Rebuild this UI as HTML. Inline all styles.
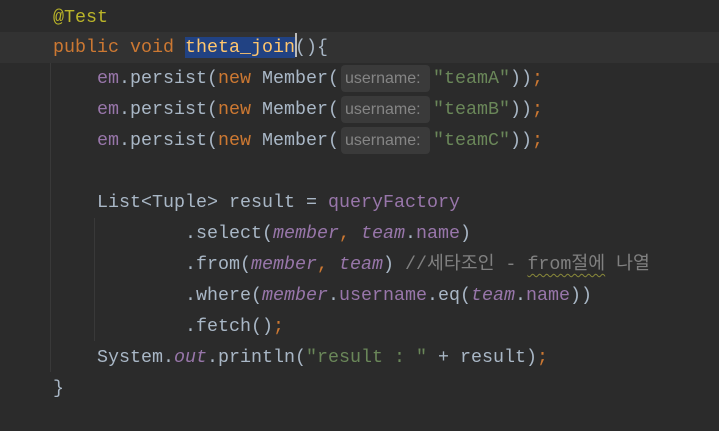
<!DOCTYPE html>
<html><head><meta charset="utf-8">
<style>
html,body{margin:0;padding:0;}
body{width:719px;height:431px;background:#2b2b2b;position:relative;overflow:hidden;
font-family:"Liberation Mono","Noto Sans CJK KR",monospace;font-size:18.33px;color:#a9b7c6;}
.l{position:absolute;left:53px;height:31px;line-height:31px;white-space:pre;}
.cur{position:absolute;left:0;top:32px;width:719px;height:31px;background:#323232;}
.k{color:#cc7832}.m{color:#ffc66d}.f{color:#9876aa}.s{color:#6a8759}.a{color:#bbb529}.c{color:#808080}
.i{font-style:italic}
.sel{background:#214283}
.hint{display:inline-block;background:#3a3a3a;color:#858585;font-family:"Liberation Sans",sans-serif;font-size:16px;
height:27px;line-height:27px;width:81px;padding:0 4px;border-radius:4px;vertical-align:top;margin:2px 3px 0 2px;}
.g{position:absolute;width:1px;background:#393939}
.caret{display:inline-block;width:2px;height:24px;background:#bbbbbb;vertical-align:middle;margin-right:-2px;position:relative;top:-2px}
.wavy{text-decoration:underline wavy #8a8a3a;text-decoration-thickness:1px;text-underline-offset:4px}
</style></head><body>
<div class="cur"></div>
<div class="g" style="left:50px;top:63px;height:309px"></div>
<div class="g" style="left:94px;top:218px;height:123px"></div>
<div class="l a" style="top:2px">@Test</div>
<div class="l" style="top:32px"><span class="k">public void </span><span class="m sel">theta_join</span><span class="caret"></span>(){</div>
<div class="l" style="top:63px">    <span class="f">em</span>.persist(<span class="k">new </span>Member(<span class="hint">username:</span><span class="s">"teamA"</span>))<span class="k">;</span></div>
<div class="l" style="top:94px">    <span class="f">em</span>.persist(<span class="k">new </span>Member(<span class="hint">username:</span><span class="s">"teamB"</span>))<span class="k">;</span></div>
<div class="l" style="top:125px">    <span class="f">em</span>.persist(<span class="k">new </span>Member(<span class="hint">username:</span><span class="s">"teamC"</span>))<span class="k">;</span></div>
<div class="l" style="top:187px">    List&lt;Tuple&gt; result = <span class="f">queryFactory</span></div>
<div class="l" style="top:218px">            .select(<span class="f i">member</span><span class="k">, </span><span class="f i">team</span>.<span class="f">name</span>)</div>
<div class="l" style="top:249px">            .from(<span class="f i">member</span><span class="k">, </span><span class="f i">team</span>) <span class="c">//세타조인 - <span class="wavy">from절에</span> 나열</span></div>
<div class="l" style="top:280px">            .where(<span class="f i">member</span>.<span class="f">username</span>.eq(<span class="f i">team</span>.<span class="f">name</span>))</div>
<div class="l" style="top:311px">            .fetch()<span class="k">;</span></div>
<div class="l" style="top:342px">    System.<span class="f i">out</span>.println(<span class="s">"result : "</span> + result)<span class="k">;</span></div>
<div class="l" style="top:373px">}</div>
</body></html>
